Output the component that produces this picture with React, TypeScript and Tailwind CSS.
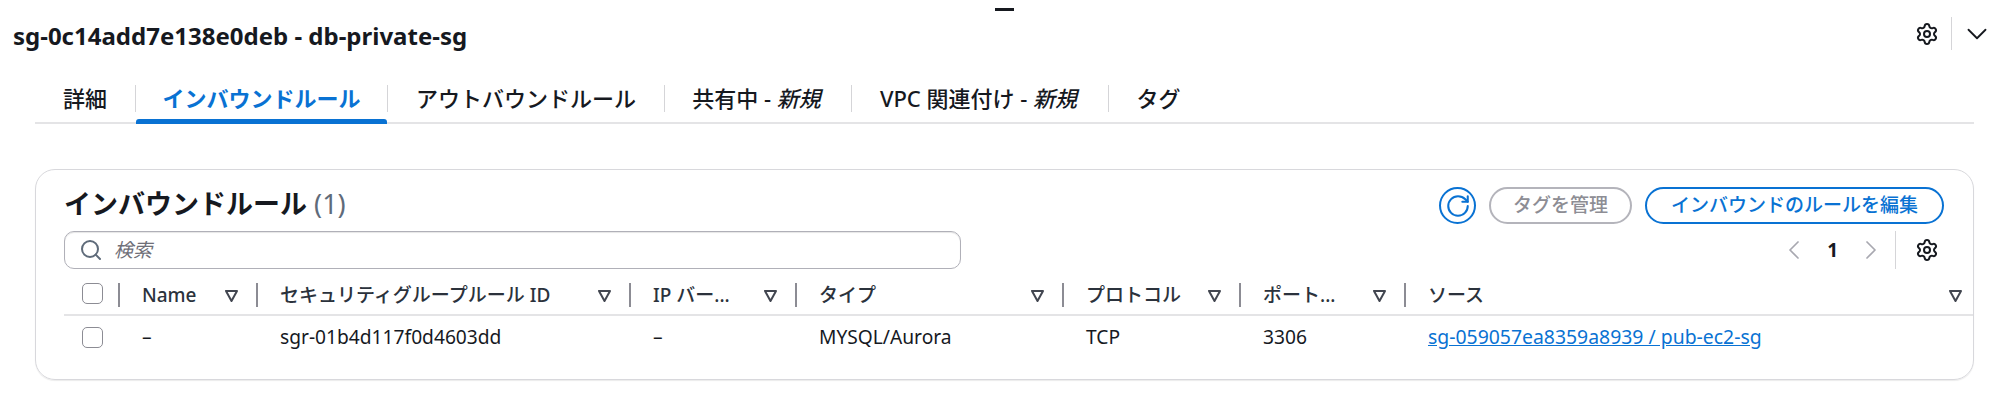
import { Search, Settings, ChevronDown, ChevronLeft, ChevronRight, RotateCw } from "lucide-react";

const font = "font-['Noto_Sans','Noto_Sans_CJK_JP',sans-serif]";

const columns = [
  { label: "Name", width: "w-[138px]" },
  { label: "セキュリティグループルール ID", width: "w-[373px]" },
  { label: "IP バー...", width: "w-[166px]" },
  { label: "タイプ", width: "w-[267px]" },
  { label: "プロトコル", width: "w-[177px]" },
  { label: "ポート...", width: "w-[165px]" },
];

const row = ["–", "sgr-01b4d117f0d4603dd", "–", "MYSQL/Aurora", "TCP", "3306"];

function FilterIcon() {
  return (
    <svg width="15" height="15" viewBox="0 0 15 15" className="shrink-0 text-[#424650]">
      <path d="M2 3h11L7.5 13z" fill="none" stroke="currentColor" strokeWidth="2" strokeLinejoin="round" />
    </svg>
  );
}

function Checkbox() {
  return <span className="block h-[21px] w-[21px] rounded-[5px] border-[1.5px] border-[#8c8c94] bg-white" />;
}

function HeaderCell({ label, width }: { label: string; width: string }) {
  return (
    <div className={`flex h-[24px] items-center justify-between border-l-2 border-[#8c8c94] pl-[22px] pr-[17px] ${width}`}>
      <span className="text-[19px] font-medium text-[#2b323c]">{label}</span>
      <FilterIcon />
    </div>
  );
}

export default function App() {
  return (
    <div className={`h-[401px] w-[2000px] overflow-hidden bg-white text-[#16191f] ${font}`}>
      {/* Top handle */}
      <div className="flex h-[17px] justify-center">
        <span className="ml-[9px] mt-[8px] block h-[3px] w-[19px] bg-[#16191f]" />
      </div>

      {/* Header */}
      <div className="flex h-[33px] items-center justify-between pl-[13px]">
        <h1 className="pt-[5px] text-[24px] font-bold">sg-0c14add7e138e0deb - db-private-sg</h1>
        <div className="flex items-center pr-[6px]">
          <Settings size={24} className="mr-[12px]" strokeWidth={2} />
          <div className="flex h-[33px] items-center border-l border-[#d5d5d8] pl-[8px]">
            <ChevronDown size={34} strokeWidth={1.3} />
          </div>
        </div>
      </div>

      {/* Tabs */}
      <div className="ml-[35px] mr-[26px] mt-[35px] flex h-[39px] items-start border-b-2 border-[#e4e4e6] text-[22px] font-medium">
        <div className="flex h-[27px] w-[100px] items-center pl-[28px]">詳細</div>
        <div className="relative flex h-[27px] w-[252px] items-center justify-center border-l border-[#d5d5d8] font-bold text-[#0972d3]">
          インバウンドルール
          <span className="absolute left-0 right-0 top-[34px] h-[5px] rounded-t-[3px] bg-[#0972d3]" />
        </div>
        <div className="flex h-[27px] w-[277px] items-center justify-center border-l border-[#d5d5d8]">アウトバウンドルール</div>
        <div className="flex h-[27px] w-[187px] items-center justify-center border-l border-[#d5d5d8] pr-[3px]">
          共有中 -&nbsp;<i>新規</i>
        </div>
        <div className="flex h-[27px] w-[257px] items-center justify-center border-l border-[#d5d5d8] pr-[3px]">
          VPC 関連付け -&nbsp;<i>新規</i>
        </div>
        <div className="flex h-[27px] w-[100px] items-center justify-center border-l border-[#d5d5d8]">タグ</div>
      </div>

      {/* Card */}
      <div className="ml-[35px] mr-[26px] mt-[45px] h-[211px] rounded-[20px] border border-[#d8d8dc] shadow-[0_1px_1px_rgba(0,0,0,0.08)]">
        <div className="flex h-[54px] items-start justify-between pl-[28px] pr-[29px] pt-[17px]">
          <h2 className="mt-[-1px] text-[27px] font-bold leading-[36px]">
            インバウンドルール <span className="font-normal text-[#5f6b7a]">(1)</span>
          </h2>
          <div className="flex items-center gap-[13px]">
            <button className="flex h-[37px] w-[37px] items-center justify-center rounded-full border-2 border-[#0972d3] text-[#0972d3]">
              <RotateCw size={26} strokeWidth={1.9} />
            </button>
            <button className="h-[37px] w-[143px] rounded-full border-2 border-[#b4b4bb] text-[19px] font-medium text-[#8d8d94]">
              タグを管理
            </button>
            <button className="h-[37px] w-[299px] rounded-full border-2 border-[#0972d3] text-[19px] font-medium text-[#0972d3]">
              インバウンドのルールを編集
            </button>
          </div>
        </div>

        {/* Search + pagination */}
        <div className="mt-[7px] flex items-center justify-between pl-[28px] pr-[34px]">
          <div className="flex h-[38px] w-[897px] items-center gap-[11px] rounded-[10px] border border-[#b0b0b8] pl-[14px] shadow-[inset_0_1px_1px_rgba(0,0,0,0.1)]">
            <Search size={24} strokeWidth={2} className="text-[#5f6b7a]" />
            <i className="text-[19px] text-[#6f6f78]">検索</i>
          </div>
          <div className="flex h-[38px] items-center">
            <ChevronLeft size={32} strokeWidth={1.3} className="text-[#a8a8b0]" />
            <span className="mx-[17px] text-[19px] font-bold">1</span>
            <ChevronRight size={32} strokeWidth={1.3} className="text-[#a8a8b0]" />
            <div className="ml-[8px] flex h-[38px] items-center border-l border-[#d5d5d8] pl-[19px]">
              <Settings size={24} strokeWidth={2} />
            </div>
          </div>
        </div>

        {/* Table */}
        <div className="ml-[28px] mt-[14px]">
          <div className="flex h-[33px] items-start border-b-2 border-[#e4e4e6]">
            <div className="w-[54px] pl-[18px]">
              <Checkbox />
            </div>
            {columns.map((col) => (
              <HeaderCell key={col.label} label={col.label} width={col.width} />
            ))}
            <div className="flex h-[24px] flex-1 items-center justify-between border-l-2 border-[#8c8c94] pl-[22px] pr-[10px]">
              <span className="text-[19px] font-medium text-[#2b323c]">ソース</span>
              <FilterIcon />
            </div>
          </div>
          <div className="flex h-[42px] items-center text-[19.2px]">
            <div className="w-[54px] pl-[18px]">
              <Checkbox />
            </div>
            {row.map((value, i) => (
              <div key={i} className={`pl-[24px] ${columns[i].width}`}>
                {value}
              </div>
            ))}
            <a href="#" className="pl-[24px] text-[19.4px] text-[#0972d3] underline">
              sg-059057ea8359a8939 / pub-ec2-sg
            </a>
          </div>
        </div>
      </div>
    </div>
  );
}
